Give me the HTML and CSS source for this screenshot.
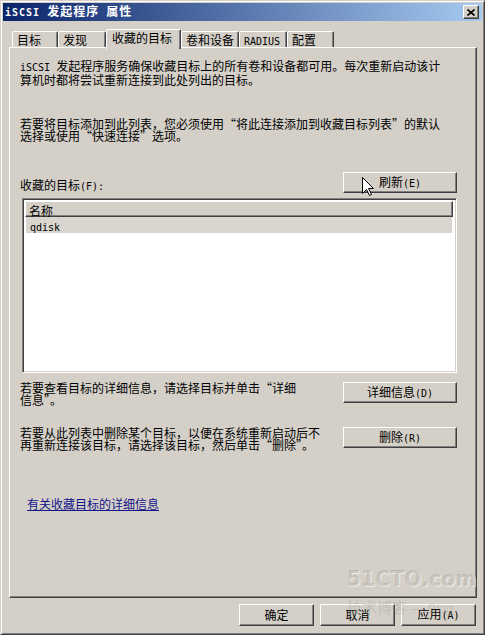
FILE: index.html
```html
<!DOCTYPE html>
<html lang="zh-CN">
<head>
    <meta charset="UTF-8">
    <meta name="viewport" content="width=device-width, initial-scale=1.0">
    <title>iSCSI 发起程序 属性</title>
    <link rel="stylesheet" href="styles.css">
</head>
<body>
<div class="window">
    <div class="titlebar">
        <span class="title"><span class="en">iSCSI </span>发起程序<span class="en"> </span>属性</span>
        <span class="closeBtn">
            <svg width="8" height="7" viewBox="0 0 8 7"><path d="M0.5 0.5 L7.5 6.5 M7.5 0.5 L0.5 6.5" stroke="#000" stroke-width="1.6"/></svg>
        </span>
    </div>
    <div class="main">
        <div class="tabs">
            <div class="tab tabTarget">目标</div>
            <div class="tab tabFind">发现</div>
            <div class="tab tabFav active">收藏的目标</div>
            <div class="tab tabVol">卷和设备</div>
            <div class="tab tabRadius"><span class="en">RADIUS</span></div>
            <div class="tab tabConf">配置</div>
        </div>
        <div class="panel">
            <p class="desc"><span class="en">iSCSI </span>发起程序服务确保收藏目标上的所有卷和设备都可用。每次重新启动该计<br>算机时都将尝试重新连接到此处列出的目标。</p>
            <p class="desc second">若要将目标添加到此列表，您必须使用“将此连接添加到收藏目标列表”的默认<br>选择或使用“快速连接”选项。</p>
            <div class="favHead">
                <label class="favLabel">收藏的目标<span class="en">(F):</span></label>
                <button class="btn">刷新<span class="en">(E)</span></button>
            </div>
            <div class="listbox">
                <div class="lvHead">名称</div>
                <div class="lvRow"><span class="en">qdisk</span></div>
            </div>
            <div class="action">
                <p class="desc">若要查看目标的详细信息，请选择目标并单击“详细<br>信息”。</p>
                <button class="btn">详细信息<span class="en">(D)</span></button>
            </div>
            <div class="action second">
                <p class="desc">若要从此列表中删除某个目标，以便在系统重新启动后不<br>再重新连接该目标，请选择该目标，然后单击“删除”。</p>
                <button class="btn">删除<span class="en">(R)</span></button>
            </div>
            <a class="moreLink" href="#">有关收藏目标的详细信息</a>
        </div>
        <div class="footer">
            <button class="btn small">确定</button>
            <button class="btn small">取消</button>
            <button class="btn small">应用<span class="en">(A)</span></button>
        </div>
    </div>
    <div class="watermark">
        <div class="wmSite">51CTO.com</div>
        <div class="wmBlog">技术博客 <span class="wmEn">— Blog</span></div>
    </div>
    <svg class="cursor" width="13" height="20" viewBox="0 0 13 20">
        <path d="M0.5 0.5 L0.5 16.5 L4.5 12.5 L7.5 18.5 L9.5 17.5 L6.5 11.5 L11.5 11.5 Z" fill="#fff" stroke="#000" stroke-width="1"/>
    </svg>
</div>
</body>
</html>
```

FILE: styles.css
```css
body{
    margin: 0;
    background-color: #d4d0c8;
    font-family: "Noto Sans CJK SC", sans-serif;
    font-size: 12px;
    line-height: 12px;
    color: #000;
}
.en{
    font-family: "DejaVu Sans Mono", monospace;
    font-size: 10px;
}
.window{
    position: relative;
    width: 485px;
    height: 635px;
    box-sizing: border-box;
    padding: 2px;
    background-color: #d4d0c8;
    border: 1px solid;
    border-color: #d4d0c8 #404040 #404040 #d4d0c8;
    box-shadow: inset 1px 1px #fff, inset -1px -1px #808080;
    overflow: hidden;
}
.titlebar{
    height: 18px;
    display: flex;
    align-items: center;
    justify-content: space-between;
    padding: 0 3px 0 2px;
    background: linear-gradient(to right, #0a246a, #a6caf0);
    color: #fff;
    font-weight: bold;
}
.title{
    white-space: pre;
    letter-spacing: 1px;
}
.closeBtn{
    width: 16px;
    height: 14px;
    box-sizing: border-box;
    display: flex;
    align-items: center;
    justify-content: center;
    background-color: #d4d0c8;
    border: 1px solid;
    border-color: #fff #404040 #404040 #fff;
    box-shadow: inset -1px -1px #808080;
}
.main{
    padding: 8px 5px 0 6px;
}
.tabs{
    display: flex;
    align-items: flex-end;
    height: 18px;
    padding-left: 3px;
}
.tab{
    height: 16px;
    box-sizing: border-box;
    padding: 2px 0 0 4px;
    white-space: nowrap;
    background-color: #d4d0c8;
    border: 1px solid;
    border-bottom: 0;
    border-color: #fff #404040 transparent #fff;
    border-radius: 2px 2px 0 0;
    box-shadow: inset -1px 0 #808080;
}
.tabTarget{ width: 46px; }
.tabFind{ width: 48px; }
.tabFav{ width: 75px; }
.tabVol{ width: 58px; }
.tabRadius{ width: 48px; }
.tabConf{ width: 47px; }
.tab.active{
    position: relative;
    z-index: 1;
    height: 20px;
    margin-bottom: -2px;
    padding-left: 5px;
}
.panel{
    height: 551px;
    box-sizing: border-box;
    padding: 12px 19px 0 10px;
    border: 1px solid;
    border-color: #fff #404040 #404040 #fff;
    box-shadow: inset -1px -1px #808080;
}
.desc{
    margin: 0;
    white-space: nowrap;
}
.desc.second{
    margin-top: 32px;
}
.favHead{
    display: flex;
    justify-content: space-between;
    align-items: flex-start;
    margin-top: 30px;
}
.favLabel{
    padding-top: 7px;
}
.btn{
    width: 114px;
    height: 21px;
    box-sizing: border-box;
    padding: 0;
    font-family: inherit;
    font-size: 12px;
    line-height: 12px;
    color: #000;
    background-color: #d4d0c8;
    border: 1px solid;
    border-color: #fff #404040 #404040 #fff;
    box-shadow: inset -1px -1px #808080;
}
.btn.small{
    width: 75px;
    height: 22px;
}
.listbox{
    height: 175px;
    box-sizing: border-box;
    margin: 5px 0 0 2px;
    padding: 2px;
    background-color: #fff;
    border: 1px solid;
    border-color: #808080 #fff #fff #808080;
    box-shadow: inset 1px 1px #404040, inset -1px -1px #d4d0c8;
}
.lvHead{
    height: 16px;
    box-sizing: border-box;
    margin-right: 1px;
    padding: 3px 0 0 3px;
    background-color: #d4d0c8;
    border: 1px solid;
    border-color: #fff #404040 #404040 #fff;
    box-shadow: inset -1px -1px #808080;
}
.lvRow{
    height: 16px;
    box-sizing: border-box;
    margin: 0 2px 0 1px;
    padding: 3px 0 0 4px;
    background-color: #d9d6d0;
}
.action{
    display: flex;
    justify-content: space-between;
    align-items: flex-start;
    margin-top: 9px;
}
.action.second{
    margin-top: 21px;
}
.moreLink{
    display: inline-block;
    margin: 47px 0 0 7px;
    color: #14148a;
    text-decoration: underline;
}
.footer{
    display: flex;
    justify-content: flex-end;
    gap: 6px;
    margin-top: 6px;
    padding-right: 1px;
}
.watermark{
    position: absolute;
    left: 346px;
    top: 567px;
    pointer-events: none;
}
.wmSite{
    font-family: "DejaVu Sans Condensed", "Liberation Sans", sans-serif;
    font-weight: bold;
    font-size: 22px;
    line-height: 22px;
    letter-spacing: 0.5px;
    color: rgba(160, 156, 148, 0.45);
    text-shadow: 1px 1px rgba(255, 255, 255, 0.6);
}
.wmBlog{
    margin-top: 9px;
    font-size: 15px;
    line-height: 16px;
    white-space: nowrap;
    color: rgba(150, 146, 138, 0.3);
}
.wmEn{
    font-family: "Liberation Sans", sans-serif;
    font-style: italic;
    font-size: 13px;
}
.cursor{
    position: absolute;
    left: 361px;
    top: 176px;
}
```
